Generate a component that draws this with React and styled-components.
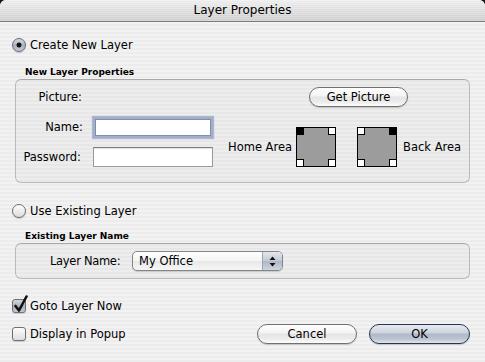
import React from "react";
import styled, { createGlobalStyle, css } from "styled-components";

const GlobalStyle = createGlobalStyle`
  html, body {
    margin: 0;
    padding: 0;
    background: #161616;
  }
  body {
    font-family: "DejaVu Sans", "Liberation Sans", sans-serif;
    color: #000;
  }
`;

const Window = styled.div`
  width: 485px;
  height: 362px;
  border-radius: 6px 6px 0 0;
  overflow: hidden;
  display: flex;
  flex-direction: column;
  background: repeating-linear-gradient(180deg, #ececec 0 2px, #f2f2f2 2px 4px);
`;

const TitleBar = styled.div`
  height: 21px;
  line-height: 21px;
  border-bottom: 1px solid #7b7b7b;
  text-align: center;
  font-size: 12px;
  background:
    repeating-linear-gradient(180deg, rgba(255, 255, 255, 0.25) 0 1px, transparent 1px 2px),
    linear-gradient(180deg, #eeeeee 0%, #dcdcdc 50%, #cdcdcd 100%);
`;

const Content = styled.div`
  display: flex;
  flex-direction: column;
  padding: 15px 15px 0 12px;
  font-size: 11.5px;
`;

const Choice = styled.label`
  display: flex;
  align-items: center;
  gap: 4px;
  height: 15px;
  margin-top: ${(p) => p.$top || 0}px;
`;

const Radio = styled.span`
  position: relative;
  width: 14px;
  height: 14px;
  box-sizing: border-box;
  border-radius: 50%;
  border: 1px solid #6c6c6c;
  box-shadow: 0 1px 1px rgba(0, 0, 0, 0.18);
  background: ${(p) =>
    p.$on
      ? "radial-gradient(circle at 50% 50%, #141414 0 2.2px, transparent 2.8px), linear-gradient(180deg, #d4d9e2 0%, #a9b1c0 55%, #c3cad6 100%)"
      : "linear-gradient(180deg, #fdfdfd 0%, #ececec 55%, #dcdcdc 100%)"};
`;

const Box = styled.span`
  position: relative;
  flex: none;
  width: 14px;
  height: 14px;
  box-sizing: border-box;
  border-radius: 3px;
  border: 1px solid #707070;
  box-shadow: 0 1px 1px rgba(0, 0, 0, 0.15);
  background: ${(p) =>
    p.$on
      ? "linear-gradient(180deg, #d2d7e0 0%, #a8b0bf 55%, #c4cbd7 100%)"
      : "linear-gradient(180deg, #fdfdfd 0%, #ececec 55%, #dedede 100%)"};
`;

const CheckMark = styled.svg`
  position: absolute;
  left: 0;
  top: -5px;
`;

const GroupLabel = styled.div`
  margin: ${(p) => p.$top}px 0 0 13px;
  font-size: 9px;
  font-weight: bold;
  line-height: 13px;
`;

const GroupBox = styled.div`
  margin-left: 3px;
  width: 455px;
  box-sizing: border-box;
  border: 1px solid #bababa;
  border-top-color: #a9a9a9;
  border-radius: 6px;
  background: rgba(0, 0, 0, 0.02);
`;

const PropsGrid = styled(GroupBox)`
  display: grid;
  grid-template-columns: 67px 120px 1fr;
  grid-template-rows: 20px 20px 20px;
  column-gap: 10px;
  row-gap: 10px;
  padding: 7px 0 15px;
`;

const FieldLabel = styled.span`
  align-self: center;
  justify-self: end;
  margin-right: ${(p) => p.$shift || 0}px;
`;

const TextField = styled.div`
  height: 20px;
  box-sizing: border-box;
  background: #fff;
  border: 1px solid #9a9a9a;
  border-top-color: #7c7c7c;
  box-shadow: inset 0 1px 1px rgba(0, 0, 0, 0.12);
  ${(p) =>
    p.$focus &&
    css`
      border: 2px solid #a3aecb;
      margin: 0 0 -1px;
      height: 21px;
      box-shadow: inset 0 0 0 1px #7f8db0, 0 0 1px 1px rgba(126, 142, 184, 0.55);
    `}
`;

const PushButton = styled.button`
  width: ${(p) => p.$w}px;
  height: 20px;
  padding: 0;
  box-sizing: border-box;
  border-radius: 10px;
  font-family: inherit;
  font-size: 11.5px;
  color: #000;
  margin-left: ${(p) => p.$left || 0}px;
  border: 1px solid ${(p) => (p.$default ? "#2b3450" : "#707070")};
  box-shadow: 0 1px 1px rgba(0, 0, 0, 0.18);
  background: ${(p) =>
    p.$default
      ? "linear-gradient(180deg, #e8ebf1 0%, #ccd2dd 45%, #b0b9c8 50%, #bcc4d2 78%, #e1e6ee 100%)"
      : "linear-gradient(180deg, #fefefe 0%, #f3f3f3 45%, #e4e4e4 50%, #ececec 78%, #fdfdfd 100%)"};
`;

const AreaPicker = styled.div`
  grid-column: 3;
  grid-row: 2 / 4;
  align-self: start;
  margin: 10px 0 0 5px;
  display: flex;
  align-items: center;
`;

const AreaName = styled.span`
  margin: ${(p) => (p.$after ? "0 0 0 6px" : "0 4px 0 0")};
`;

const Swatch = styled.svg`
  display: block;
  margin-right: ${(p) => p.$gap || 0}px;
`;

const LayerRow = styled(GroupBox)`
  height: 36px;
  display: flex;
  align-items: center;
  padding-left: 34px;
  gap: 11px;
`;

const RowLabel = styled.span`
  width: 71px;
  white-space: nowrap;
  letter-spacing: -0.3px;
`;

const Popup = styled.div`
  width: 151px;
  height: 20px;
  box-sizing: border-box;
  display: flex;
  border: 1px solid #858585;
  border-radius: 5px;
  overflow: hidden;
  box-shadow: 0 1px 1px rgba(0, 0, 0, 0.15);
  background: linear-gradient(180deg, #ffffff 0%, #f4f4f4 50%, #e8e8e8 51%, #f6f6f6 100%);
`;

const PopupText = styled.span`
  flex: 1;
  padding-left: 6px;
  line-height: 18px;
`;

const PopupArrows = styled.span`
  width: 19px;
  display: flex;
  align-items: center;
  justify-content: center;
  border-left: 1px solid #9ea6b4;
  background: linear-gradient(180deg, #e4e8ee 0%, #c2c9d5 50%, #aeb7c6 51%, #cfd5df 100%);
`;

const Footer = styled.div`
  display: flex;
  align-items: center;
  margin-top: 11px;
  height: 20px;
`;

const Spacer = styled.div`
  flex: 1;
`;

const Buttons = styled.div`
  display: flex;
  gap: 12px;
`;

function AreaSwatch({ active, gap }) {
  const corner = (x, y, on) => (
    <rect x={x + 0.5} y={y + 0.5} width="7" height="7" fill={on ? "#000" : "#fff"} stroke="#000" />
  );
  return (
    <Swatch width="40" height="40" viewBox="0 0 40 40" $gap={gap}>
      <rect x="0.5" y="0.5" width="39" height="39" fill="#9c9c9c" stroke="#000" />
      {corner(0, 0, active === "tl")}
      {corner(32, 0, active === "tr")}
      {corner(0, 32, false)}
      {corner(32, 32, false)}
    </Swatch>
  );
}

function Checkbox({ on }) {
  return (
    <Box $on={on}>
      {on && (
        <CheckMark width="17" height="19" viewBox="0 0 17 19">
          <path d="M2.5 11 L6 15.5 L13.5 1.5" fill="none" stroke="#111" strokeWidth="2.6" strokeLinecap="round" strokeLinejoin="round" />
        </CheckMark>
      )}
    </Box>
  );
}

export default function App() {
  return (
    <>
      <GlobalStyle />
      <Window>
        <TitleBar>Layer Properties</TitleBar>
        <Content>
          <Choice>
            <Radio $on />
            Create New Layer
          </Choice>

          <GroupLabel $top={14}>New Layer Properties</GroupLabel>
          <PropsGrid>
            <FieldLabel $shift={1}>Picture:</FieldLabel>
            <span />
            <PushButton $w={99} $left={86}>Get Picture</PushButton>

            <FieldLabel>Name:</FieldLabel>
            <TextField $focus />

            <FieldLabel $shift={2}>Password:</FieldLabel>
            <TextField />

            <AreaPicker>
              <AreaName>Home Area</AreaName>
              <AreaSwatch active="tl" gap={21} />
              <AreaSwatch active="tr" />
              <AreaName $after>Back Area</AreaName>
            </AreaPicker>
          </PropsGrid>

          <Choice $top={20}>
            <Radio />
            Use Existing Layer
          </Choice>

          <GroupLabel $top={12}>Existing Layer Name</GroupLabel>
          <LayerRow>
            <RowLabel>Layer Name:</RowLabel>
            <Popup>
              <PopupText>My Office</PopupText>
              <PopupArrows>
                <svg width="7" height="11" viewBox="0 0 7 11">
                  <path d="M3.5 0.5 L6.5 4 L0.5 4 Z" fill="#111" />
                  <path d="M3.5 10.5 L6.5 7 L0.5 7 Z" fill="#111" />
                </svg>
              </PopupArrows>
            </Popup>
          </LayerRow>

          <Choice $top={19}>
            <Checkbox on />
            Goto Layer Now
          </Choice>

          <Footer>
            <Choice>
              <Checkbox />
              Display in Popup
            </Choice>
            <Spacer />
            <Buttons>
              <PushButton $w={100}>Cancel</PushButton>
              <PushButton $w={101} $default>OK</PushButton>
            </Buttons>
          </Footer>
        </Content>
      </Window>
    </>
  );
}
